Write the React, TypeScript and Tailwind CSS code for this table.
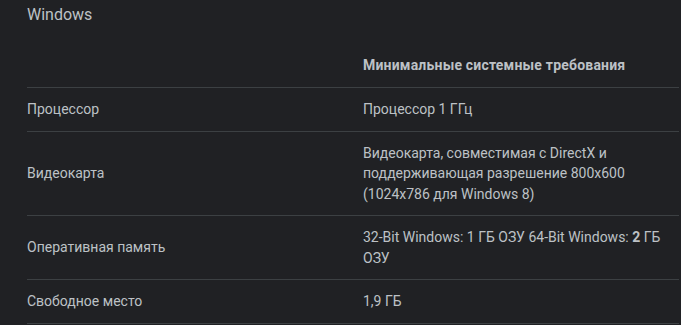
import React from "react";

const rows: { label: string; value: React.ReactNode }[] = [
  { label: "Процессор", value: "Процессор 1 ГГц" },
  {
    label: "Видеокарта",
    value: "Видеокарта, совместимая с DirectX и поддерживающая разрешение 800x600 (1024x786 для Windows 8)",
  },
  {
    label: "Оперативная память",
    value: (
      <>
        32-Bit Windows: 1 ГБ ОЗУ 64-Bit Windows: <b className="font-bold">2</b> ГБ ОЗУ
      </>
    ),
  },
  { label: "Свободное место", value: "1,9 ГБ" },
];

export default function App() {
  return (
    <div className="h-[325px] w-full bg-[#202124] pl-[27px] pr-[2px] text-[#bdc1c6] font-['Roboto',sans-serif]">
      <div className="pt-[3px] text-[16px] leading-6">Windows</div>

      <table className="mt-[17px] w-full border-collapse text-[14px] leading-[21px]">
        <thead>
          <tr>
            <th className="w-[336px]" />
            <th className="py-[11px] text-left font-bold tracking-[0.2px]">Минимальные системные требования</th>
          </tr>
        </thead>
        <tbody className="leading-[20.5px]">
          {rows.map((r) => (
            <tr key={r.label} className="border-y border-[#3c4043]">
              <td className="py-[11px] align-middle">{r.label}</td>
              <td className="py-[11px] pr-[12px] align-middle">{r.value}</td>
            </tr>
          ))}
        </tbody>
      </table>
    </div>
  );
}
